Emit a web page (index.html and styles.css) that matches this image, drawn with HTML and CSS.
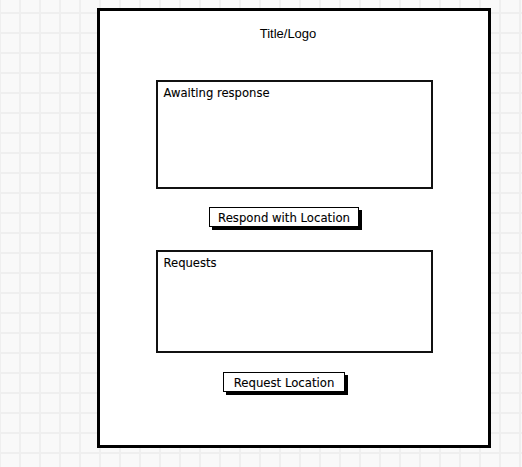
FILE: index.html
```html
<!DOCTYPE html>
<html>
<head>
<meta charset="utf-8">
<link rel="stylesheet" href="styles.css">
</head>
<body>
  <div class="frame">
    <div class="title">Title/Logo</div>
    <div class="panel panel-awaiting">Awaiting response</div>
    <div class="btn btn-respond">Respond with Location</div>
    <div class="panel panel-requests">Requests</div>
    <div class="btn btn-request">Request Location</div>
  </div>
</body>
</html>
```
FILE: styles.css
```css
html {
  background-color: #f9f9f9;
  background-image:
    linear-gradient(to right, #efefef 2px, transparent 2px),
    linear-gradient(to bottom, #efefef 2px, transparent 2px);
  background-size: 20px 20px;
  background-position: -1px 12px;
  min-height: 100%;
}

body {
  margin: 0;
  padding: 8px 0 0 97px;
  font-family: "DejaVu Sans", sans-serif;
  color: #000;
}

.frame {
  box-sizing: border-box;
  width: 394px;
  height: 440px;
  background: #fff;
  border: 3px solid #000;
  display: flex;
  flex-direction: column;
  align-items: center;
}

.title {
  font-family: "Liberation Sans", Arial, sans-serif;
  font-size: 13px;
  line-height: 15px;
  margin-top: 15px;
  margin-right: 12px;
}

.panel {
  box-sizing: border-box;
  width: 277px;
  border: 2px solid #111;
  font-size: 11.6px;
  line-height: 13px;
  padding: 5px 6px;
  -webkit-text-stroke: 0.1px #000;
}

.panel-awaiting {
  height: 109px;
  margin-top: 39px;
}

.panel-requests {
  height: 103px;
  margin-top: 23px;
}

.btn {
  box-sizing: border-box;
  height: 20px;
  border: 1px solid #000;
  box-shadow: 3px 3px 0 #000;
  font-size: 11.7px;
  line-height: 15px;
  padding: 3px 0 0;
  text-align: center;
  background: #fff;
  margin-right: 20px;
  -webkit-text-stroke: 0.1px #000;
}

.btn-respond {
  width: 150px;
  margin-top: 18px;
}

.btn-request {
  width: 122px;
  margin-top: 19px;
}
```
